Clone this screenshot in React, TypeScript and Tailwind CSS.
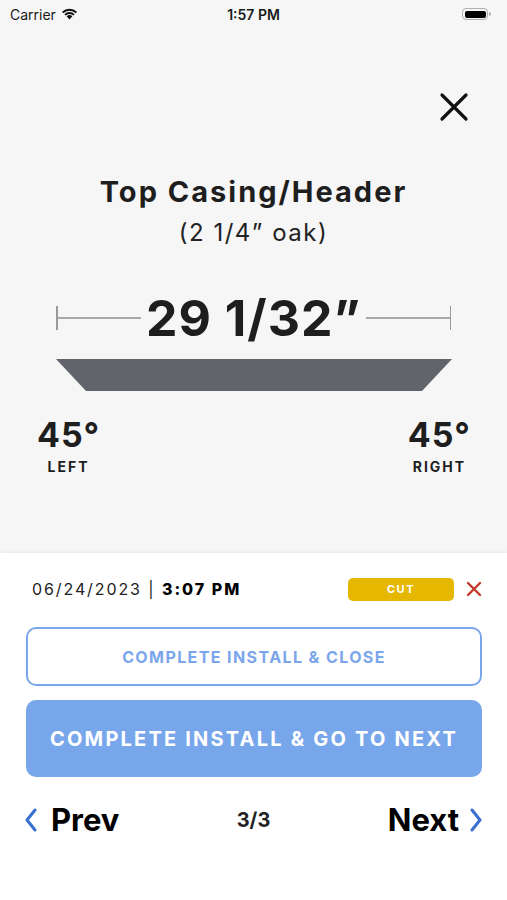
import React from "react";

const poppins = { fontFamily: "Inter, 'Noto Sans', sans-serif" };

function Chevron({ dir }: { dir: "left" | "right" }) {
  return (
    <svg width="14" height="24" viewBox="0 0 14 24" fill="none">
      <path
        d={dir === "left" ? "M11 2 L3 12 L11 22" : "M3 2 L11 12 L3 22"}
        stroke="#3a6fd0"
        strokeWidth="3"
        strokeLinecap="round"
        strokeLinejoin="round"
      />
    </svg>
  );
}

function DimLine({ side }: { side: "left" | "right" }) {
  return (
    <div className="flex flex-1 items-center">
      {side === "left" && <div className="h-[24px] w-[1.5px] bg-[#9a9a9a]" />}
      <div className="h-[1.5px] flex-1 bg-[#a8a8a8]" />
      {side === "right" && <div className="h-[24px] w-[1.5px] bg-[#9a9a9a]" />}
    </div>
  );
}

export default function App() {
  return (
    <div
      className="flex h-[900px] w-[507px] flex-col overflow-hidden bg-white text-[#1e1e1e]"
      style={poppins}
    >
      {/* top card */}
      <div className="flex h-[553px] flex-col bg-[#f6f6f6]">
        <div className="flex h-[28px] items-center justify-between px-[10px] text-[14px] text-[#1a1a1a]">
          <div className="flex w-[120px] items-center gap-[5px]">
            <span>Carrier</span>
            <svg width="17" height="12" viewBox="0 0 17 12">
              <path d="M8.5 11.5 L5.6 8.3 A4.2 4.2 0 0 1 11.4 8.3 Z" fill="#111" />
              <path d="M3.4 6.2 A7.3 7.3 0 0 1 13.6 6.2 L12.3 7.6 A5.4 5.4 0 0 0 4.7 7.6 Z" fill="#111" />
              <path d="M1 3.8 A10.8 10.8 0 0 1 16 3.8 L14.7 5.2 A8.9 8.9 0 0 0 2.3 5.2 Z" fill="#111" />
            </svg>
          </div>
          <span className="font-semibold">1:57 PM</span>
          <div className="flex w-[120px] items-center justify-end pr-[6px]">
            <div className="flex h-[12px] w-[26px] items-center rounded-[4px] border border-[#b0b0b0] p-[1.5px]">
              <div className="h-full w-full rounded-[2px] bg-black" />
            </div>
            <div className="ml-[1px] h-[4px] w-[1.5px] rounded-r bg-[#b0b0b0]" />
          </div>
        </div>

        <div className="mt-[64px] flex justify-end pr-[38px]">
          <svg width="30" height="30" viewBox="0 0 30 30">
            <path d="M3 3 L27 27 M27 3 L3 27" stroke="#111" strokeWidth="3.2" strokeLinecap="round" />
          </svg>
        </div>

        <div className="mt-[53px] text-center text-[29px] leading-[34px] font-bold tracking-[2px]">
          Top Casing/Header
        </div>
        <div className="mt-[9px] text-center text-[24px] leading-[30px] tracking-[1.5px] text-[#222]">
          (2 1/4” oak)
        </div>

        <div className="mt-[42px] flex items-center px-[56px]">
          <DimLine side="left" />
          <div className="px-[5px] text-[50px] leading-[56px] font-bold tracking-[1px]">29 1/32”</div>
          <DimLine side="right" />
        </div>

        <svg className="mt-[13px] ml-[56px]" width="396" height="32" viewBox="0 0 396 32">
          <polygon points="0,0 396,0 366,32 30,32" fill="#62646b" />
        </svg>

        <div className="mt-[25px] flex justify-between pl-[37px] pr-[36px]">
          <div className="flex flex-col items-center">
            <span className="text-[34px] leading-[38px] font-bold tracking-[1px]">45°</span>
            <span className="mt-[4px] text-[14px] leading-[18px] font-bold tracking-[2px]">LEFT</span>
          </div>
          <div className="flex flex-col items-center">
            <span className="text-[34px] leading-[38px] font-bold tracking-[1px]">45°</span>
            <span className="mt-[4px] text-[14px] leading-[18px] font-bold tracking-[2px]">RIGHT</span>
          </div>
        </div>
      </div>

      {/* bottom sheet */}
      <div className="flex flex-1 flex-col bg-white shadow-[0_-1px_3px_rgba(0,0,0,0.06)]">
        <div className="mt-[24px] flex h-[24px] items-center justify-between pl-[32px] pr-[25px]">
          <div className="text-[16px] tracking-[1.9px] text-[#222]">
            06/24/2023 | <span className="font-extrabold tracking-[2px] text-black">3:07 PM</span>
          </div>
          <div className="flex items-center gap-[12px]">
            <div className="flex h-[23px] w-[106px] items-center justify-center rounded-[5px] bg-[#e5b700] text-[11px] font-bold tracking-[1.5px] text-white">
              CUT
            </div>
            <svg width="16" height="16" viewBox="0 0 16 16">
              <path d="M2 2 L14 14 M14 2 L2 14" stroke="#c0392b" strokeWidth="2.4" strokeLinecap="round" />
            </svg>
          </div>
        </div>

        <button className="mt-[26px] ml-[26px] mr-[25px] flex h-[59px] items-center justify-center rounded-[10px] border-2 border-[#7ba6ec] bg-white text-[16px] font-bold tracking-[1.4px] text-[#7ba6ec]">
          COMPLETE INSTALL &amp; CLOSE
        </button>
        <button className="mt-[14px] ml-[26px] mr-[25px] flex h-[77px] items-center justify-center rounded-[10px] bg-[#78a6eb] text-[20px] font-bold tracking-[2.2px] text-white">
          COMPLETE INSTALL &amp; GO TO NEXT
        </button>

        <div className="mt-[25px] flex h-[36px] items-center justify-between pl-[24px] pr-[24px]">
          <div className="flex w-[140px] items-center gap-[13px]">
            <Chevron dir="left" />
            <span className="text-[31px] leading-[36px] font-bold text-black">Prev</span>
          </div>
          <span className="text-[20px] font-bold text-[#222]">3/3</span>
          <div className="flex w-[140px] items-center justify-end gap-[10px]">
            <span className="text-[31px] leading-[36px] font-bold text-black">Next</span>
            <Chevron dir="right" />
          </div>
        </div>
      </div>
    </div>
  );
}
